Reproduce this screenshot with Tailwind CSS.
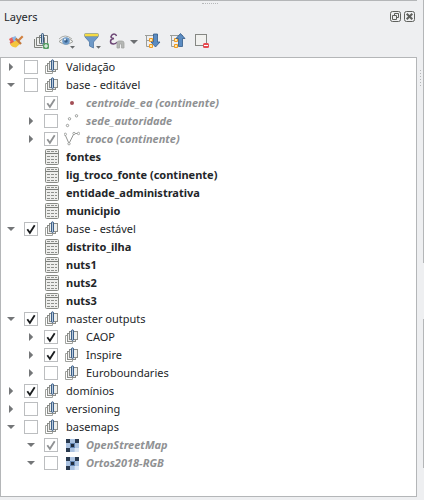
<!DOCTYPE html>
<html lang="pt">
<head>
<meta charset="utf-8">
<title>Layers</title>
<script src="https://cdn.jsdelivr.net/npm/@tailwindcss/browser@4"></script>
</head>
<body class="w-[424px] h-[500px] overflow-hidden bg-[#eeeff1] font-['Noto_Sans','Open_Sans',sans-serif] text-[11px] text-[#232629]">
<svg class="hidden">
  <symbol id="group" viewBox="0 0 14 16">
    <path d="M3 6.500H.5v8h7V12.500" fill="none" stroke="#a0a29e"/>
    <rect x="2.500" y="4.500" width="8" height="8" fill="#eee" stroke="#8c8e8a"/>
    <rect x="4.500" y="2.500" width="8" height="8" fill="#eeefec" stroke="#8c8e8a"/>
    <path d="M6.500 4.500v5.500q0 1.500 1 1.500t1-1.500V2q0-1.200-1-1.200t-1 1.200v3" fill="#b9c8d8" stroke="#3c608a"/>
  </symbol>
  <symbol id="table" viewBox="0 0 14 16">
    <rect x=".5" y=".5" width="13" height="15" rx="1" fill="#eeeeec" stroke="#888a85"/>
    <path d="M1 4.500h12" stroke="#7c7e7a"/>
    <path d="M2 2.500h3m1 0h3m1 0h2M2 7.500h3m1 0h3m1 0h2M2 10.500h3m1 0h3m1 0h2M2 13.500h3m1 0h3m1 0h2" stroke="#8e908c"/>
  </symbol>
  <symbol id="raster" viewBox="0 0 13 13">
    <rect width="13" height="13" fill="#bdd0e9"/>
    <path d="M0 0h4v4H0zM9 0h4v4H9zM0 9h4v4H0z" fill="#293a50"/>
    <path d="M4 0h5v4H4zM0 4h4v5H0zM8 4h5v5H8zM4 9h4v4H4z" fill="#abc3e2"/>
    <path d="M4 4h5v5H4z" fill="#6385b2"/><path d="M5 5h3v3H5z" fill="#202d3e"/>
    <path d="M9 9h4v4H9z" fill="#dae6f5"/>
  </symbol>
  <symbol id="point" viewBox="0 0 14 16"><circle cx="7" cy="8" r="2" fill="#a34f55"/></symbol>
  <symbol id="points" viewBox="0 0 14 16"><g fill="none" stroke="#929492" stroke-width=".9"><circle cx="2.500" cy="12.500" r="1.200"/><circle cx="4.500" cy="5.800" r="1.200"/><circle cx="11.500" cy="2.800" r="1.200"/></g></symbol>
  <symbol id="line" viewBox="0 0 16 16"><g fill="none" stroke="#929492"><path d="M1 3.500l4 9L10 2.500h4.500"/><g fill="#fff" stroke-width=".8"><circle cx="1.300" cy="3.300" r="1.200"/><circle cx="5" cy="12.700" r="1.200"/><circle cx="10" cy="2.500" r="1.200"/><circle cx="14.500" cy="2.500" r="1.200"/></g></g></symbol>
  <symbol id="check" viewBox="0 0 14 14"><path d="M3.300 7.200l2.600 3.600 4.800-7.500" fill="none" stroke="currentColor" stroke-width="1.800"/></symbol>
  <symbol id="right" viewBox="0 0 8 8"><path d="M2 0l4.200 4L2 8z" fill="#747678"/></symbol>
  <symbol id="down" viewBox="0 0 8 8"><path d="M0 2h8L4 6z" fill="#747678"/></symbol>
  <symbol id="tree" viewBox="0 0 16 16"><path d="M0 2.500h13M1.500 2v11.500H5M2 7.500h3" fill="none" stroke="#9b9d99"/><path d="M4.500 5.500h3v3h-3zM4.500 11.500h3v3h-3z" fill="#fce9a7" stroke="#f39b22"/></symbol>
</svg>
<div class="flex h-full">
  <main class="w-[417px] flex flex-col border-t border-[#b4b6b8] relative">
    <div class="absolute left-[202px] top-[2px] w-4 border-t border-dotted border-[#b5b7b9]"></div>
    <header class="h-[30px] flex items-center pl-1 pr-[2px] pt-[1px]">
      <h1 class="flex-1 pt-[2px]">Layers</h1>
      <div class="flex gap-[3px]">
        <svg width="11" height="11" fill="none" stroke="#5f615d"><rect x=".5" y=".5" width="10" height="10" rx="2"/><path d="M4.500 4V2.500h4v4H7M2.500 4.500h4v4h-4z"/></svg>
        <svg width="11" height="11" fill="none" stroke="#5f615d"><rect x=".5" y=".5" width="10" height="10" rx="2"/><path d="M2.700 2.700l5.600 5.600m0-5.600L2.700 8.300" stroke-width="2"/></svg>
      </div>
    </header>
    <nav class="h-[26px] flex items-start pl-2 pt-[2px]">
      <svg class="w-4 h-4 mr-[10px]" viewBox="0 0 16 16"><path d="M1 6l3.500-2L7 8 3 10z" fill="#e9605a"/><path d="M4 4.500L7.500 3 10 8 6 9z" fill="#8bb8e6"/><path d="M1.500 9.500L5 8l3 2-4 3z" fill="#e3584e"/><path d="M2 11l7-4 3.500 3.500L8 14.500q-4 0-6-3.500z" fill="#f4c63d"/><path d="M10 8l4.700-4.700" stroke="#d1803f" stroke-width="2.200"/><path d="M7.700 5.500l5.300 5.500" stroke="#c2773a" stroke-width="2.200"/></svg>
      <svg class="w-4 h-4 mr-[8px]" viewBox="0 0 16 16"><path d="M.5 6v8.500h8M2.500 4.500h8v8h-8zM5.500 2.500h8v8h-8z" fill="#eeefed" stroke="#7d807c"/><path d="M7.500 4v5.500q0 1.500 1 1.500t1-1.500V1.500q0-1-1-1t-1 1V9" fill="#b9c8d8" stroke="#34597f"/><rect x="9" y="10" width="6" height="6" rx="1.500" fill="#59a065"/><path d="M12 11v4m-2-2h4" stroke="#fff"/></svg>
      <svg class="w-[18px] h-4 mr-[8px]" viewBox="0 0 18 16"><path d="M1 8.500Q8 2 15 8.500Q8 14 1 8.500z" fill="#f5f5f3" stroke="#9b9e99"/><path d="M1 6q6-6 13 0" fill="none" stroke="#aaaca8"/><circle cx="8" cy="8" r="3.800" fill="#6e9bc9"/><circle cx="8" cy="8" r="1.700" fill="#365f8a"/><circle cx="7" cy="6.500" r=".9" fill="#fff"/><path d="M12 13h5l-2.500 2.700z" fill="#686b6d"/></svg>
      <svg class="w-[18px] h-4 mr-[7px]" viewBox="0 0 18 16"><path d="M1 2h13v2L9.500 9v6l-4-2V9L1 4z" fill="#6d99c8" stroke="#5079a5" stroke-width=".8"/><rect x=".5" y=".5" width="14" height="3" rx="1" fill="#f5db45" stroke="#8a9a8b" stroke-width=".7"/><path d="M12 13h5l-2.500 2.700z" fill="#686b6d"/></svg>
      <svg class="w-4 h-4 mr-[5px]" viewBox="0 0 16 16"><path d="M7.500 3Q7 1 5 1T2 3.500Q2 5.500 5 5.500Q1.500 6 1.500 8.500T4.500 11Q7 11 8 9" fill="none" stroke="#6c4675" stroke-width="1.500"/><path d="M8 15v-5q0-2 2-2h3q2 0 2 2v5h-2.500v-4h-2v4z" fill="#b5b7b5" stroke="#a2a5a2" stroke-width=".8"/></svg>
      <svg class="w-2 h-[18px] mr-[7px]" viewBox="0 0 8 18"><path d="M0 7h8l-4 4z" fill="#6c6f72"/></svg>
      <svg class="w-4 h-4 mr-[9px]" viewBox="0 0 16 16"><use href="#tree"/><path d="M8.500 1h4v8h2.500l-4.500 5L6 9h2.500z" fill="#5b8cc2" stroke="#345c89" stroke-width=".8"/></svg>
      <svg class="w-4 h-4 mr-[9px]" viewBox="0 0 16 16"><use href="#tree"/><path d="M8.500 13.500h4v-8h2.500L10.500.5 6 5.500h2.500z" fill="#5b8cc2" stroke="#345c89" stroke-width=".8"/></svg>
      <svg class="w-4 h-4" viewBox="0 0 16 16"><rect x=".5" y="1.500" width="11" height="11" fill="#f1f1ef" stroke="#858783"/><rect x="8" y="10" width="6" height="5" rx="1.500" fill="#e64a50"/><path d="M9 12.500h4" stroke="#fff"/></svg>
    </nav>
    <section id="layers" class="h-[440px] bg-white border border-[#b4b6b8]"></section>
  </main>
  <aside class="w-[7px] flex">
    <div class="w-[6px] pt-[70px] pl-[3px]"><div class="h-[16px] w-px bg-[repeating-linear-gradient(#b4b6b8_0_1px,transparent_1px_3px)]"></div></div>
    <div class="w-px"><div class="h-[263px] bg-[#b4b6b8]"></div><div class="h-[56px]"></div><div class="h-[149px] bg-[#b4b6b8]"></div></div>
  </aside>
</div>
<script>
// Each layer: level, arrow, checkbox (0 none, 1 empty, 2 checked), icon, name, style
const layers = [
  [0,'right',1,'group','Validação',''],
  [0,'down',1,'group','base - editável',''],
  [1,'',2,'point','centroide_ea (continente)','off'],
  [1,'right',1,'points','sede_autoridade','off'],
  [1,'right',2,'line','troco (continente)','off'],
  [0,'',0,'table','fontes','bold'],
  [0,'',0,'table','lig_troco_fonte (continente)','bold'],
  [0,'',0,'table','entidade_administrativa','bold'],
  [0,'',0,'table','municipio','bold'],
  [0,'down',2,'group','base - estável',''],
  [0,'',0,'table','distrito_ilha','bold'],
  [0,'',0,'table','nuts1','bold'],
  [0,'',0,'table','nuts2','bold'],
  [0,'',0,'table','nuts3','bold'],
  [0,'down',2,'group','master outputs',''],
  [1,'right',2,'group','CAOP',''],
  [1,'right',2,'group','Inspire',''],
  [1,'right',1,'group','Euroboundaries',''],
  [0,'right',2,'group','domínios',''],
  [0,'right',1,'group','versioning',''],
  [0,'down',1,'group','basemaps',''],
  [1,'down',2,'raster','OpenStreetMap','off'],
  [1,'down',1,'raster','Ortos2018-RGB','off']
];
const textStyle = {'':'', bold:'font-bold', off:'font-bold italic text-[#8f9193]'};
const iconStyle = {group:'w-[14px] h-4', table:'w-[14px] h-4', raster:'w-[13px] h-[13px] ml-px', point:'w-[14px] h-4', points:'w-[14px] h-4', line:'w-4 h-4 -ml-px'};
document.getElementById('layers').innerHTML = layers.map(([level,arrow,box,icon,name,style]) => `
  <div class="h-[18px] flex items-center whitespace-nowrap ${level ? 'pl-[26px]' : 'pl-[6px]'}">
    <div class="w-[17px] shrink-0">${arrow ? `<svg class="w-2 h-2"><use href="#${arrow}"/></svg>` : ''}</div>
    <div class="w-[21px] shrink-0">${box ? `<div class="w-[14px] h-[14px] border border-[#bcbec0]"><svg class="w-[14px] h-[14px] -m-px ${style === 'off' ? 'text-[#8f9193]' : 'text-[#1b1e20]'}">${box === 2 ? '<use href="#check"/>' : ''}</svg></div>` : ''}</div>
    <div class="w-[21px] shrink-0"><svg class="${iconStyle[icon]}"><use href="#${icon}"/></svg></div>
    <span class="leading-[18px] ${textStyle[style]}">${name}</span>
  </div>`).join('');
</script>
</body>
</html>
